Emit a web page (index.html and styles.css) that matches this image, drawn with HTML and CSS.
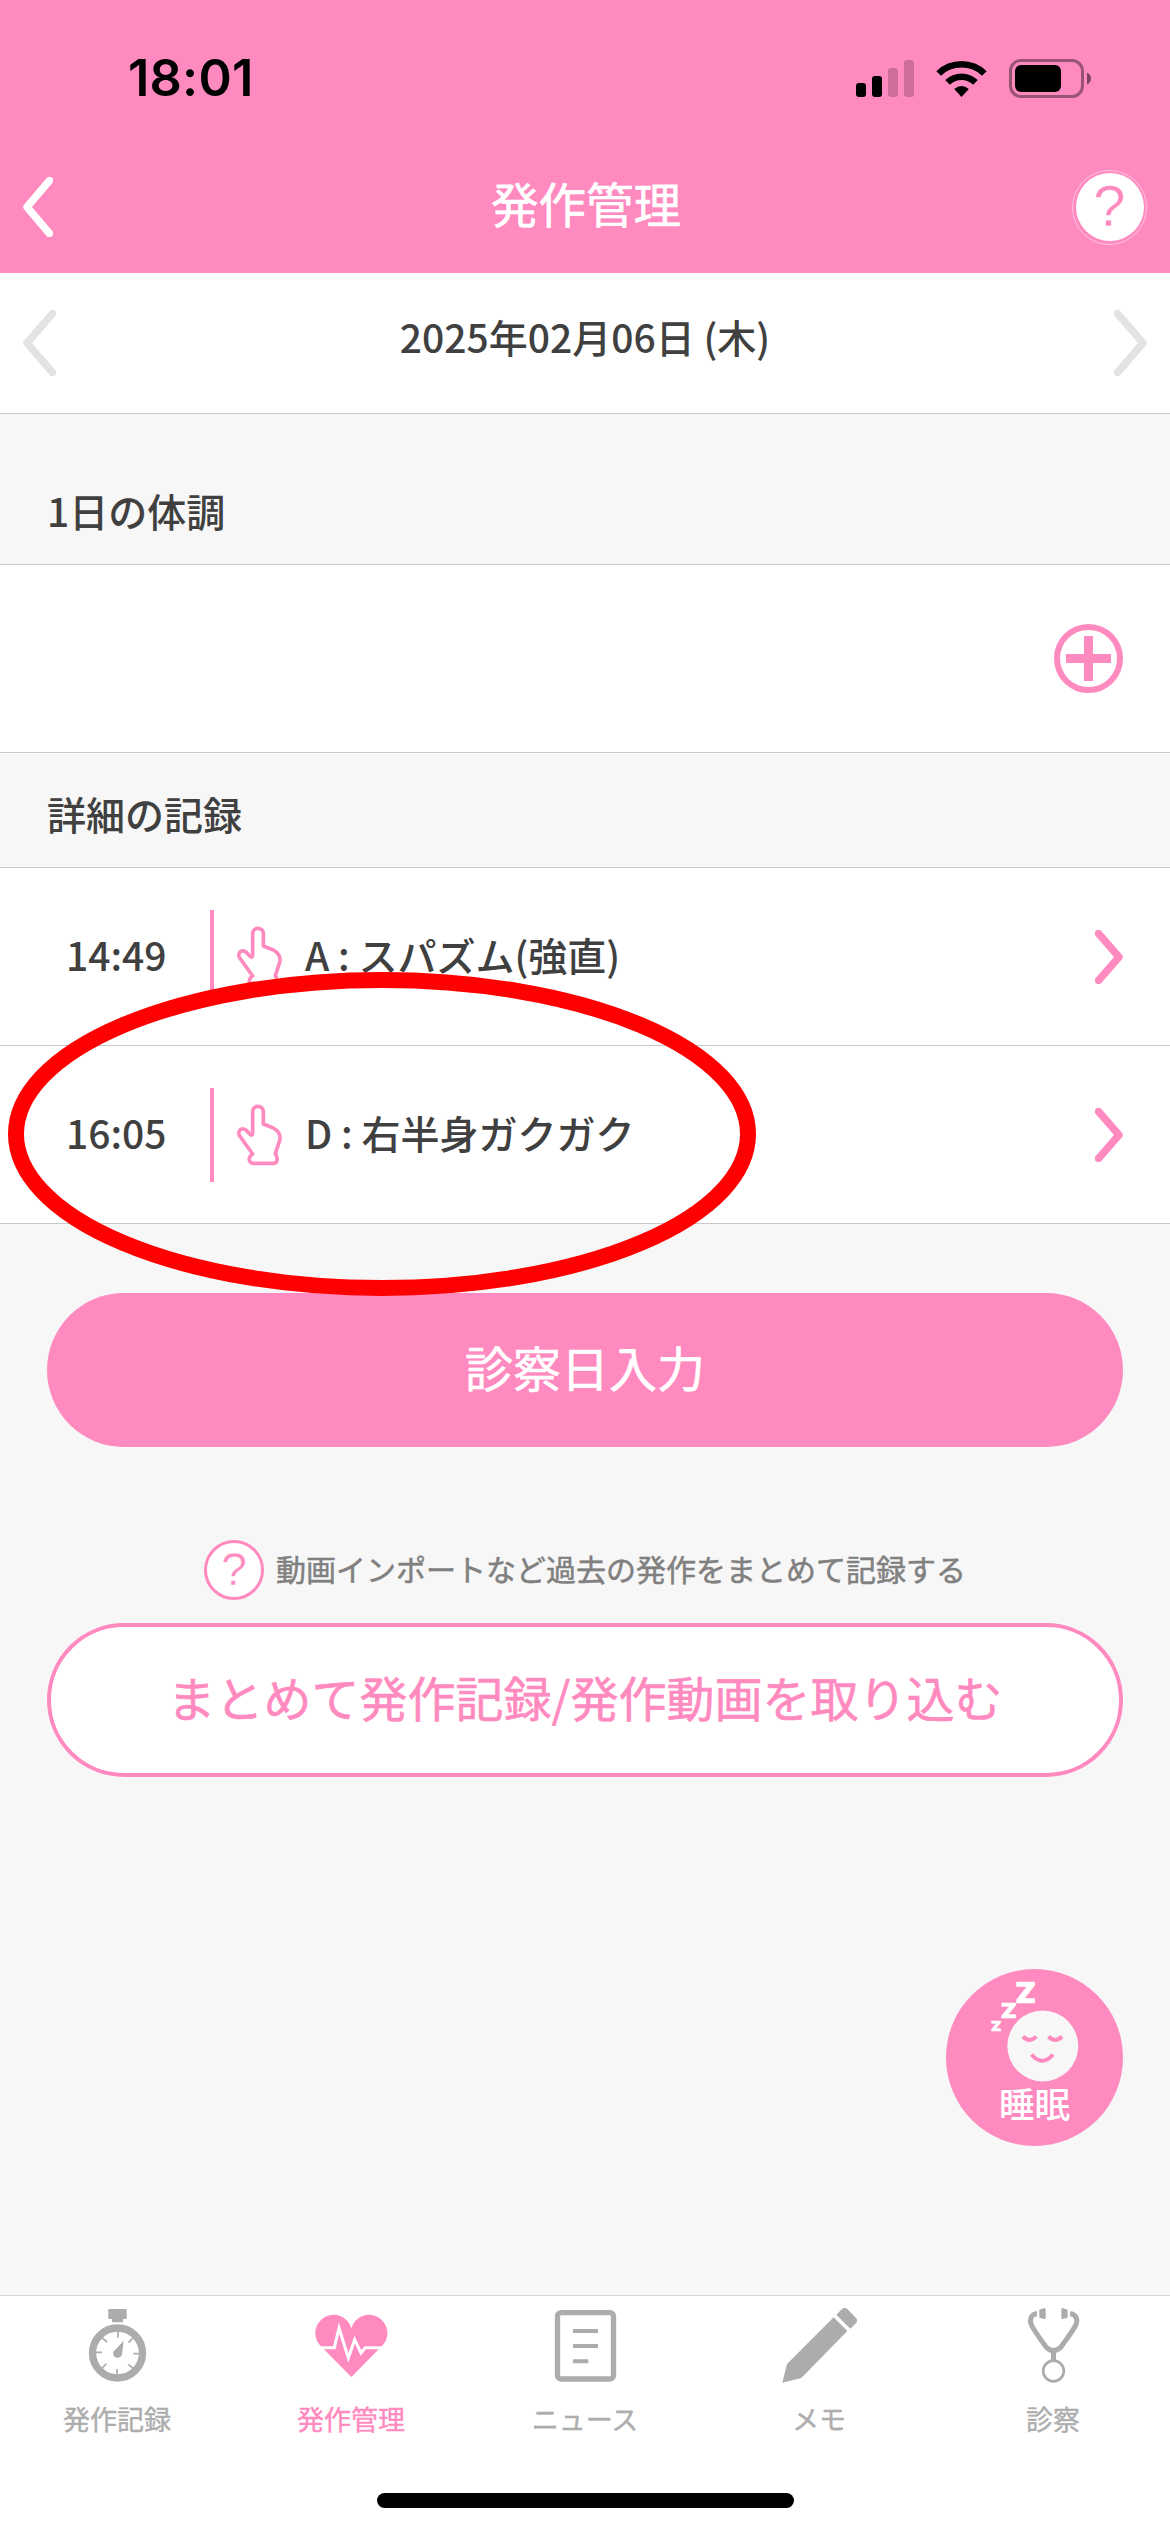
FILE: index.html
```html
<!DOCTYPE html>
<html lang="ja">
<head>
<meta charset="utf-8">
<title>発作管理</title>
<link rel="stylesheet" href="styles.css">
</head>
<body>
<div class="screen">
  <header class="header">
    <div class="status">
      <span class="clock">18:01</span>
      <svg class="status-icons" viewBox="0 0 236 39" width="236" height="39">
        <g>
          <rect x="0" y="24" width="10" height="14" rx="3"/>
          <rect x="16" y="17" width="10" height="21" rx="3"/>
          <rect x="32" y="9" width="10" height="29" rx="3" opacity=".2"/>
          <rect x="48" y="1" width="10" height="37" rx="3" opacity=".2"/>
        </g>
        <path d="M80.300 12.200A36 36 0 0 1 130.700 12.200L126 16.700A29.500 29.500 0 0 0 85 16.700Z"/>
        <path d="M89.200 21A23.500 23.500 0 0 1 121.800 21L117.200 25.700A17 17 0 0 0 93.800 25.700Z"/>
        <path d="M98.200 30Q105.500 24 112.800 30L105.500 38Z"/>
        <rect x="154.500" y="1.500" width="72" height="36" rx="10.500" fill="none" stroke="#000" stroke-opacity=".4" stroke-width="3"/>
        <rect x="159" y="6" width="46" height="27" rx="6"/>
        <path d="M231 13.500Q235 15.500 235 19.500T231 25.500Z" opacity=".5"/>
      </svg>
    </div>
    <div class="titlebar">
      <svg class="back" viewBox="0 0 30 60" width="30" height="60"><path d="M26.500 3.500L4 30L26.500 56.500"/></svg>
      <h1 class="title">発作管理</h1>
      <span class="help"><span class="help-disc">?</span></span>
    </div>
  </header>

  <nav class="datebar">
    <svg class="arrow" viewBox="0 0 33 66" width="33" height="66"><path d="M29.500 3.500L4 33L29.500 62.500"/></svg>
    <span class="date">2025年02月06日 (木)</span>
    <svg class="arrow" viewBox="0 0 33 66" width="33" height="66"><path d="M3.500 3.500L29 33L3.500 62.500"/></svg>
  </nav>

  <main class="content">
    <h2 class="section section-day">1日の体調</h2>
    <div class="condition">
      <svg viewBox="0 0 69 69" width="69" height="69">
        <circle cx="34.500" cy="34.500" r="31.500" fill="none" stroke="#ff8ac0" stroke-width="6"/>
        <path d="M12 34.500H57M34.500 12V57" stroke="#ff8ac0" stroke-width="9"/>
      </svg>
    </div>
    <h2 class="section section-detail">詳細の記録</h2>
    <div class="row">
      <span class="time">14:49</span>
      <span class="bar"></span>
      <svg class="hand" viewBox="0 0 144 192" width="48" height="64"><path d="M53 156L13 100Q8 89 17 82Q25 78 33 84L45 97Q53 103 53 92V29A16 16 0 0 1 85 29V66L115 78Q137 90 135 112L121 155Q129 166 125 178Q123 184 115 184H55Q45 184 43 174Q42 162 53 156Z"/></svg>
      <span class="name">A : スパズム(強直)</span>
      <svg class="go" viewBox="0 0 28 54" width="28" height="54"><path d="M3.500 3.500L24 27L3.500 50.500"/></svg>
    </div>
    <div class="row">
      <span class="time">16:05</span>
      <span class="bar"></span>
      <svg class="hand" viewBox="0 0 144 192" width="48" height="64"><path d="M53 156L13 100Q8 89 17 82Q25 78 33 84L45 97Q53 103 53 92V29A16 16 0 0 1 85 29V66L115 78Q137 90 135 112L121 155Q129 166 125 178Q123 184 115 184H55Q45 184 43 174Q42 162 53 156Z"/></svg>
      <span class="name">D : 右半身ガクガク</span>
      <svg class="go" viewBox="0 0 28 54" width="28" height="54"><path d="M3.500 3.500L24 27L3.500 50.500"/></svg>
    </div>
    <div class="actions">
      <div class="button button-fill">診察日入力</div>
      <div class="hint"><span class="hint-icon">?</span><span class="hint-text">動画インポートなど過去の発作をまとめて記録する</span></div>
      <div class="button button-line">まとめて発作記録/発作動画を取り込む</div>
    </div>
    <svg class="marker" viewBox="0 0 748 324" width="748" height="324"><ellipse cx="374" cy="162" rx="366" ry="154"/></svg>
    <div class="sleep">
      <svg viewBox="0 -14 88 114" width="88" height="114">
        <g class="zzz">
          <text x="0" y="48" font-size="13.500" textLength="10.300" lengthAdjust="spacingAndGlyphs">Z</text>
          <text x="9.700" y="35" font-size="20.500" textLength="16" lengthAdjust="spacingAndGlyphs">Z</text>
          <text x="24.200" y="20.300" font-size="28" textLength="20.800" lengthAdjust="spacingAndGlyphs">Z</text>
        </g>
        <circle cx="51.800" cy="63" r="35.500"/>
        <path d="M32 53.500Q38.700 60.500 45.300 53.500M57.500 53.500Q64.300 60.500 71 53.500M40.500 71.500Q51.300 84 62 71.500" fill="none" stroke="#ff8ac0" stroke-width="4"/>
      </svg>
      <span class="sleep-label">睡眠</span>
    </div>
  </main>

  <footer class="footer">
    <div class="tabs">
      <div class="tab">
        <svg viewBox="0 0 228 234" width="76" height="78">
          <path d="M88 6H143V36H132V46H99V36H88Z"/>
          <circle cx="115.500" cy="138" r="75" fill="none" stroke="#abadac" stroke-width="22"/>
          <path d="M117 70V92M114 186V206M48 136H69M163 140H183M68 91L84 105M163 91L149 107M70 183L82 170M163 185L148 172" fill="none" stroke="#abadac" stroke-width="5"/>
          <path d="M134 101L129 143A13.500 13.500 0 1 1 103 134Z"/>
        </svg>
        <span>発作記録</span>
      </div>
      <div class="tab tab-active">
        <svg viewBox="0 0 228 234" width="76" height="78">
          <path d="M115 64A55 55 0 1 0 21 115L115 210L209 115A55 55 0 1 0 115 64Z"/>
          <path d="M0 122H64L78 63L106 153L125 98L144 138L157 122H228" fill="none" stroke="#fff" stroke-width="9" stroke-miterlimit="10"/>
        </svg>
        <span>発作管理</span>
      </div>
      <div class="tab">
        <svg viewBox="0 0 228 234" width="76" height="78">
          <rect x="31.500" y="17" width="168" height="199" rx="11" fill="none" stroke="#abadac" stroke-width="16"/>
          <path d="M78 72H153M78 117H153M78 163H124" stroke="#abadac" stroke-width="12"/>
        </svg>
        <span>ニュース</span>
      </div>
      <div class="tab">
        <svg viewBox="0 0 228 234" width="76" height="78">
          <path d="M158 31L199 72L61 213L4 227L18 171Z"/>
          <path d="M166 23L183 6Q191 0 199 6L225 33Q231 40 226 47L208 65Z"/>
        </svg>
        <span>メモ</span>
      </div>
      <div class="tab">
        <svg viewBox="0 0 228 234" width="76" height="78">
          <g fill="none" stroke="#abadac">
            <path d="M66 20C50 20 42 36 49 53C56 70 80 102 94 121Q115 140 137 121C151 102 175 70 183 53C190 36 181 20 165 20" stroke-width="15"/>
            <path d="M115.500 132V160" stroke-width="15"/>
            <circle cx="115.500" cy="192" r="31" stroke-width="8"/>
          </g>
          <path d="M73 8L88 3Q92 3 92 8V32Q92 37 88 36L73 32ZM158 8L143 3Q139 3 139 8V32Q139 37 143 36L158 32Z"/>
        </svg>
        <span>診察</span>
      </div>
    </div>
    <div class="home"></div>
  </footer>
</div>
</body>
</html>
```
FILE: styles.css
```css
* { box-sizing: border-box; }
body {
  margin: 0;
  font-family: "Noto Sans CJK JP", sans-serif;
  color: #404040;
}
svg { display: block; flex: none; }
.screen {
  width: 1170px;
  height: 2532px;
  display: flex;
  flex-direction: column;
  background: #f7f7f7;
  overflow: hidden;
}
.header { height: 273px; background: #ff8ac0; color: #fff; }
.status {
  height: 141px;
  padding: 15px 78px 0 128px;
  display: flex;
  justify-content: space-between;
  align-items: center;
  color: #000;
}
.clock {
  font: 600 50.500px/60px Inter, sans-serif;
  letter-spacing: .2px;
}
.titlebar {
  height: 132px;
  padding: 0 23px;
  display: grid;
  grid-template-columns: 75px 1fr 75px;
  align-items: center;
}
.back, .arrow, .go {
  fill: none;
  stroke-width: 7.5px;
  stroke-linecap: round;
  stroke-linejoin: round;
}
.back { stroke: #fff; }
.title {
  margin: 0;
  padding: 0 0 8px 2px;
  text-align: center;
  font-size: 47.500px;
  line-height: 60px;
  font-weight: 400;
  -webkit-text-stroke: .6px;
}
.help {
  width: 75px;
  height: 75px;
  border: 1px solid #ffc4e0;
  border-radius: 50%;
  display: grid;
  place-items: center;
}
.help-disc {
  width: 68px;
  height: 68px;
  border-radius: 50%;
  background: #fff;
  color: #ff8ac0;
  text-align: center;
  font: 58px/65px "Liberation Sans", sans-serif;
  -webkit-text-stroke: .4px #fff;
}
.datebar {
  height: 141px;
  padding: 0 23px;
  display: flex;
  justify-content: space-between;
  align-items: center;
  background: #fff;
  border-bottom: 1px solid #c8c8c8;
}
.arrow { stroke: #e3e3e3; }
.date {
  padding-bottom: 14px;
  font-size: 39px;
  line-height: 56px;
  font-weight: 500;
}
.content { flex: 1; position: relative; }
.section {
  margin: 0;
  padding-left: 47px;
  font-size: 39px;
  line-height: 56px;
  font-weight: 500;
  border-bottom: 1px solid #c8c8c8;
}
.section-day { height: 151px; padding-top: 68px; }
.section-detail { height: 115px; padding-top: 32px; }
.condition {
  height: 188px;
  padding-right: 47px;
  display: flex;
  justify-content: flex-end;
  align-items: center;
  background: #fff;
  border-bottom: 1px solid #c8c8c8;
}
.row {
  height: 178px;
  padding: 0 47px 0 66px;
  display: flex;
  align-items: center;
  background: #fff;
  border-bottom: 1px solid #c8c8c8;
  font-size: 39px;
  line-height: 56px;
  font-weight: 500;
}
.time, .name { padding-bottom: 6px; }
.time { width: 144px; }
.bar { width: 4px; height: 94px; background: #ff8ac0; }
.hand {
  margin: 0 22px 2px 21px;
  fill: none;
  stroke: #ff8ac0;
  stroke-width: 11px;
  stroke-linejoin: round;
}
.name { flex: 1; }
.go { stroke: #ff8ac0; }
.actions { padding: 69px 47px 0; }
.button {
  height: 154px;
  border-radius: 77px;
  display: flex;
  align-items: center;
  justify-content: center;
  padding-bottom: 8px;
  font-size: 48px;
  line-height: 60px;
  -webkit-text-stroke: .6px;
}
.button-fill { background: #ff8ac0; color: #fff; }
.button-line {
  border: 4px solid #ff8ac0;
  background: #fff;
  color: #ff8ac0;
}
.hint {
  height: 60px;
  margin: 93px 0 23px;
  display: flex;
  align-items: center;
  justify-content: center;
  gap: 12px;
  color: #808080;
  font-size: 30px;
  line-height: 44px;
}
.hint-icon {
  width: 60px;
  height: 60px;
  border: 3px solid #ff8ac0;
  border-radius: 50%;
  background: #fff;
  color: #ff8ac0;
  text-align: center;
  font: 46px/53px "Liberation Sans", sans-serif;
  -webkit-text-stroke: .4px #fff;
}
.hint-text { padding-bottom: 5px; -webkit-text-stroke: .5px; }
.marker {
  position: absolute;
  left: 8px;
  top: 558px;
  fill: none;
  stroke: #f00;
  stroke-width: 16px;
}
.sleep {
  position: absolute;
  right: 47px;
  top: 1555px;
  width: 177px;
  height: 177px;
  border-radius: 50%;
  background: #ff8ac0;
  display: flex;
  flex-direction: column;
  align-items: center;
  fill: #f7f7f7;
  font-family: Inter, sans-serif;
  font-weight: 900;
}
.zzz { fill: #fff; stroke: #fff; stroke-width: .6px; }
.sleep-label {
  margin-top: -4px;
  color: #fff;
  font: 500 35.500px/48px "Noto Sans CJK JP", sans-serif;
}
.footer {
  height: 237px;
  background: #fff;
  border-top: 1px solid #d8d8d8;
}
.tabs { display: grid; grid-template-columns: repeat(5, 1fr); height: 197px; }
.tab {
  padding-top: 11px;
  display: flex;
  flex-direction: column;
  align-items: center;
  gap: 14px;
  font-size: 27px;
  line-height: 40px;
  color: #adadad;
  fill: #abadac;
  -webkit-text-stroke: .4px;
}
.tab-active { color: #ff8ac0; fill: #ff8ac0; }
.home {
  width: 417px;
  height: 15px;
  margin: 0 auto;
  border-radius: 8px;
  background: #000;
}
```
